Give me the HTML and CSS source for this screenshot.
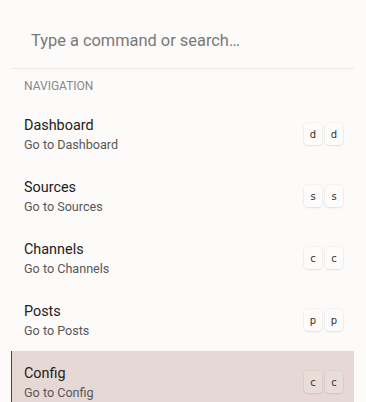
FILE: index.html
```html
<!DOCTYPE html>
<html>
<head>
<meta charset="utf-8">
<link rel="stylesheet" href="styles.css">
</head>
<body>
<div class="palette">
  <div class="search">
    <input class="search-input" type="text" placeholder="Type a command or search…">
  </div>
  <div class="group">
    <div class="group-heading">Navigation</div>
    <div class="item">
      <div class="item-text"><div class="item-title">Dashboard</div><div class="item-sub">Go to Dashboard</div></div>
      <div class="keys"><kbd class="key">d</kbd><kbd class="key">d</kbd></div>
    </div>
    <div class="item">
      <div class="item-text"><div class="item-title">Sources</div><div class="item-sub">Go to Sources</div></div>
      <div class="keys"><kbd class="key">s</kbd><kbd class="key">s</kbd></div>
    </div>
    <div class="item">
      <div class="item-text"><div class="item-title">Channels</div><div class="item-sub">Go to Channels</div></div>
      <div class="keys"><kbd class="key">c</kbd><kbd class="key">c</kbd></div>
    </div>
    <div class="item">
      <div class="item-text"><div class="item-title">Posts</div><div class="item-sub">Go to Posts</div></div>
      <div class="keys"><kbd class="key">p</kbd><kbd class="key">p</kbd></div>
    </div>
    <div class="item selected">
      <div class="item-text"><div class="item-title">Config</div><div class="item-sub">Go to Config</div></div>
      <div class="keys"><kbd class="key">c</kbd><kbd class="key">c</kbd></div>
    </div>
  </div>
</div>
</body>
</html>
```
FILE: styles.css
```css
html, body {
  margin: 0;
  padding: 0;
  background: #fcfbfa;
  font-family: Roboto, "Liberation Sans", sans-serif;
  overflow: hidden;
}
.palette {
  margin: 12px 12px 0 12px;
  display: flex;
  flex-direction: column;
}
.search {
  height: 56px;
  display: flex;
  align-items: center;
  border-bottom: 1px solid #ebe9e7;
}
.search-input {
  border: none;
  outline: none;
  background: transparent;
  font-family: Roboto, "Liberation Sans", sans-serif;
  font-size: 16.4px;
  line-height: 24px;
  padding: 1px 0 0 19px;
  width: 100%;
  color: #333;
}
.search-input::placeholder {
  color: #7a7877;
}
.group-heading {
  font-size: 12px;
  line-height: 16px;
  text-transform: uppercase;
  color: #8a8786;
  padding: 9px 12px 9px 12px;
}
.item {
  display: flex;
  align-items: center;
  justify-content: space-between;
  padding: 12px 11px 12px 12px;
  border-left: 1px solid transparent;
  margin-left: -1px;
}
.item.selected {
  background: #e6d9d5;
  border-left-color: #4a4340;
}
.item-title {
  font-size: 14.4px;
  line-height: 21px;
  color: #222020;
}
.item-sub {
  font-size: 12.6px;
  line-height: 17px;
  color: #5a5756;
}
.keys {
  display: flex;
  gap: 3px;
}
.key {
  width: 18px;
  height: 22px;
  display: flex;
  align-items: center;
  justify-content: center;
  font-family: "DejaVu Sans", "Liberation Sans", sans-serif;
  font-size: 10px;
  color: #333;
  background: #fdfcfb;
  border-radius: 4px;
  box-shadow: 0 1px 2px rgba(0,0,0,0.08), 0 0 0 1px rgba(0,0,0,0.03);
}
.selected .key {
  background: #e9ddd9;
}
```
